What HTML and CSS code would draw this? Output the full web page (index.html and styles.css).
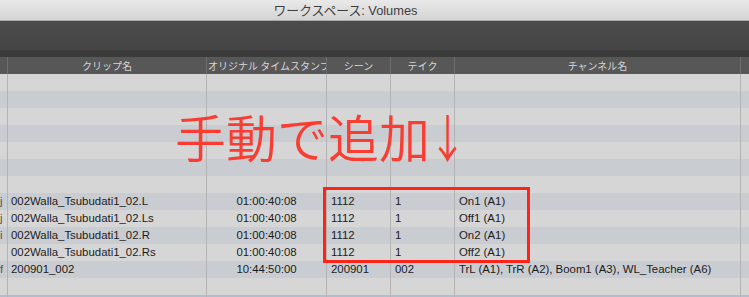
FILE: index.html
```html
<!DOCTYPE html>
<html lang="ja">
  <head>
    <meta charset="UTF-8" />
    <title>ワークスペース: Volumes</title>
    <link rel="stylesheet" href="styles.css">
  </head>
  <body>
    <div class="window">
      <div class="titlebar">ワークスペース: Volumes</div>
      <div class="toolbar"></div>
      <div class="toolbar-edge"></div>
      <div class="table">
        <div class="row head">
          <div class="cell"></div>
          <div class="cell center">クリップ名</div>
          <div class="cell clip">オリジナル タイムスタンプ</div>
          <div class="cell center">シーン</div>
          <div class="cell center">テイク</div>
          <div class="cell center">チャンネル名</div>
          <div class="cell"></div>
        </div>
        <div class="row"><div class="cell"></div><div class="cell"></div><div class="cell"></div><div class="cell"></div><div class="cell"></div><div class="cell"></div><div class="cell"></div></div>
        <div class="row"><div class="cell"></div><div class="cell"></div><div class="cell"></div><div class="cell"></div><div class="cell"></div><div class="cell"></div><div class="cell"></div></div>
        <div class="row"><div class="cell"></div><div class="cell"></div><div class="cell"></div><div class="cell"></div><div class="cell"></div><div class="cell"></div><div class="cell"></div></div>
        <div class="row"><div class="cell"></div><div class="cell"></div><div class="cell"></div><div class="cell"></div><div class="cell"></div><div class="cell"></div><div class="cell"></div></div>
        <div class="row"><div class="cell"></div><div class="cell"></div><div class="cell"></div><div class="cell"></div><div class="cell"></div><div class="cell"></div><div class="cell"></div></div>
        <div class="row"><div class="cell"></div><div class="cell"></div><div class="cell"></div><div class="cell"></div><div class="cell"></div><div class="cell"></div><div class="cell"></div></div>
        <div class="row"><div class="cell"></div><div class="cell"></div><div class="cell"></div><div class="cell"></div><div class="cell"></div><div class="cell"></div><div class="cell"></div></div>
        <div class="row">
          <div class="cell edge">j</div>
          <div class="cell name">002Walla_Tsubudati1_02.L</div>
          <div class="cell center">01:00:40:08</div>
          <div class="cell">1112</div>
          <div class="cell">1</div>
          <div class="cell">On1 (A1)</div>
          <div class="cell"></div>
        </div>
        <div class="row">
          <div class="cell edge">j</div>
          <div class="cell name">002Walla_Tsubudati1_02.Ls</div>
          <div class="cell center">01:00:40:08</div>
          <div class="cell">1112</div>
          <div class="cell">1</div>
          <div class="cell">Off1 (A1)</div>
          <div class="cell"></div>
        </div>
        <div class="row">
          <div class="cell edge">i</div>
          <div class="cell name">002Walla_Tsubudati1_02.R</div>
          <div class="cell center">01:00:40:08</div>
          <div class="cell">1112</div>
          <div class="cell">1</div>
          <div class="cell">On2 (A1)</div>
          <div class="cell"></div>
        </div>
        <div class="row">
          <div class="cell edge"></div>
          <div class="cell name">002Walla_Tsubudati1_02.Rs</div>
          <div class="cell center">01:00:40:08</div>
          <div class="cell">1112</div>
          <div class="cell">1</div>
          <div class="cell">Off2 (A1)</div>
          <div class="cell"></div>
        </div>
        <div class="row">
          <div class="cell edge">f</div>
          <div class="cell name">200901_002</div>
          <div class="cell center">10:44:50:00</div>
          <div class="cell">200901</div>
          <div class="cell">002</div>
          <div class="cell">TrL (A1), TrR (A2), Boom1 (A3), WL_Teacher (A6)</div>
          <div class="cell"></div>
        </div>
        <div class="row"><div class="cell"></div><div class="cell"></div><div class="cell"></div><div class="cell"></div><div class="cell"></div><div class="cell"></div><div class="cell"></div></div>
        <div class="row selected"><div class="cell"></div><div class="cell"></div><div class="cell"></div><div class="cell"></div><div class="cell"></div><div class="cell"></div><div class="cell"></div></div>
      </div>

      <!-- annotation drawn over the table -->
      <div class="note">手動で追加<span class="arrow">↓</span></div>
      <div class="mark"></div>
    </div>
  </body>
</html>
```

FILE: styles.css
```css
* {
  box-sizing: border-box;
}
body {
  margin: 0;
  background-color: #d6d6d6;
  overflow: hidden;
}
.window {
  position: relative;
  width: 749px;
  height: 297px;
  overflow: hidden;
  font-family: "Liberation Sans", "Noto Sans CJK JP", sans-serif;
}
.titlebar {
  height: 21px;
  padding-right: 58px;
  border-bottom: 1px solid #a9a9a9;
  background: linear-gradient(#e9e9e9, #d4d4d4);
  color: #3e3e3e;
  font-size: 12.8px;
  line-height: 21px;
  text-align: center;
}
.toolbar {
  height: 29px;
  background: linear-gradient(#4b4b4b, #454545);
}
.toolbar-edge {
  height: 7px;
  background-color: #3b3b3b;
}

.table .row {
  display: grid;
  grid-template-columns: 8px 199px 120px 64px 64px 286px 1fr;
  height: 17px;
  background-color: #d6d6d6;
  color: #1c1c1c;
  font-size: 11.4px;
  line-height: 17px;
}
.table .row:nth-child(odd) {
  background-color: #c9ccd1;
}
.table .row.head {
  background-color: #575757;
  color: #d6d6d6;
  font-family: "Noto Sans CJK JP", sans-serif;
  font-size: 10px;
  line-height: 18px;
}
.table .row.selected {
  background-color: #b2bdd0;
}
.cell {
  border-right: 1px solid #b3b3b3;
  padding-left: 4px;
  white-space: nowrap;
  overflow: hidden;
}
.head .cell {
  border-right-color: #6e6e6e;
}
.cell:last-child {
  border-right: none;
}
.cell.name {
  padding-left: 3px;
}
.cell.center {
  padding-left: 0;
  text-align: center;
}
.cell.clip {
  padding-left: 1px;
  text-overflow: clip;
}
.cell.edge {
  padding: 0 5px 0 0;
  text-align: right;
  color: #555;
}

.note {
  position: absolute;
  left: 175px;
  top: 111px;
  color: #fa3d33;
  font-family: "Noto Sans CJK JP", sans-serif;
  font-size: 51px;
  font-weight: 350;
  line-height: 51px;
  white-space: nowrap;
}
.note .arrow {
  display: inline-block;
  margin-left: -8px;
  transform: scaleX(0.75);
}
.mark {
  position: absolute;
  left: 323px;
  top: 187px;
  width: 207px;
  height: 76px;
  border: 3px solid #ff2419;
}
```
